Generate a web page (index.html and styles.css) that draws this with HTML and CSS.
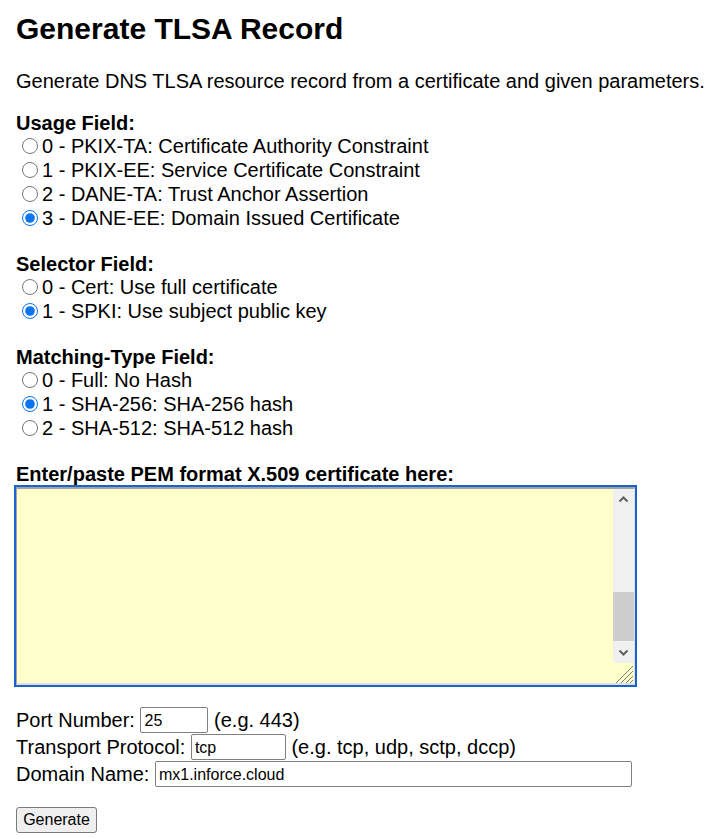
FILE: index.html
```html
<!DOCTYPE html>
<html lang="en">
<head>
<meta charset="utf-8">
<title>Generate TLSA Record</title>
<link rel="stylesheet" href="styles.css">
</head>
<body>
<div class="page">
  <h1 class="title">Generate TLSA Record</h1>
  <p class="intro">Generate DNS TLSA resource record from a certificate and given parameters.</p>

  <div class="group">
    <div class="group-title">Usage Field:</div>
    <label class="opt"><input class="radio" type="radio" name="usage" value="0">0 - PKIX-TA: Certificate Authority Constraint</label>
    <label class="opt"><input class="radio" type="radio" name="usage" value="1">1 - PKIX-EE: Service Certificate Constraint</label>
    <label class="opt"><input class="radio" type="radio" name="usage" value="2">2 - DANE-TA: Trust Anchor Assertion</label>
    <label class="opt"><input class="radio" type="radio" name="usage" value="3" checked>3 - DANE-EE: Domain Issued Certificate</label>
  </div>

  <div class="group">
    <div class="group-title">Selector Field:</div>
    <label class="opt"><input class="radio" type="radio" name="selector" value="0">0 - Cert: Use full certificate</label>
    <label class="opt"><input class="radio" type="radio" name="selector" value="1" checked>1 - SPKI: Use subject public key</label>
  </div>

  <div class="group">
    <div class="group-title">Matching-Type Field:</div>
    <label class="opt"><input class="radio" type="radio" name="mtype" value="0">0 - Full: No Hash</label>
    <label class="opt"><input class="radio" type="radio" name="mtype" value="1" checked>1 - SHA-256: SHA-256 hash</label>
    <label class="opt"><input class="radio" type="radio" name="mtype" value="2">2 - SHA-512: SHA-512 hash</label>
  </div>

  <div class="group">
    <div class="group-title">Enter/paste PEM format X.509 certificate here:</div>
    <div class="pem">
      <textarea class="pem-text" name="cert" spellcheck="false"></textarea>
      <div class="pem-side">
        <div class="sb">
          <div class="sb-btn">
            <svg width="21" height="21" viewBox="0 0 21 21"><polyline points="6.5,12.5 10.5,8.5 14.5,12.5" fill="none" stroke="#5f5f5f" stroke-width="2"/></svg>
          </div>
          <div class="sb-track"><div class="sb-thumb"></div></div>
          <div class="sb-btn">
            <svg width="21" height="21" viewBox="0 0 21 21"><polyline points="6.5,8.5 10.5,12.5 14.5,8.5" fill="none" stroke="#5f5f5f" stroke-width="2"/></svg>
          </div>
        </div>
        <div class="grip">
          <svg width="21" height="20" viewBox="0 0 21 20"><g stroke="#7a7a7a" stroke-width="1"><line x1="20" y1="3" x2="3" y2="20"/><line x1="20" y1="8" x2="8" y2="20"/><line x1="20" y1="13" x2="13" y2="20"/><line x1="20" y1="17" x2="17" y2="20"/></g></svg>
        </div>
      </div>
    </div>
  </div>

  <div class="fields">
    <div class="row">Port Number: <input class="field w-port" type="text" value="25"> (e.g. 443)</div>
    <div class="row">Transport Protocol: <input class="field w-proto" type="text" value="tcp"> (e.g. tcp, udp, sctp, dccp)</div>
    <div class="row">Domain Name: <input class="field w-domain" type="text" value="mx1.inforce.cloud"></div>
  </div>

  <button class="btn" type="button">Generate</button>
</div>
</body>
</html>
```

FILE: styles.css
```css
html, body {
  margin: 0;
  padding: 0;
  background: #ffffff;
}

body {
  font-family: "Liberation Sans", Arial, sans-serif;
  color: #000000;
  font-size: 20px;
}

.page {
  padding: 12px 16px 0 16px;
}

.title {
  margin: 0;
  font-size: 30px;
  line-height: 34px;
  font-weight: bold;
}

.intro {
  margin: 24px 0 0 0;
  line-height: 23px;
}

.group {
  margin-top: 24px;
}

.intro + .group {
  margin-top: 20px;
}

.group-title {
  font-weight: bold;
  line-height: 21px;
}

.opt {
  display: block;
  line-height: 24px;
  height: 24px;
  white-space: nowrap;
}

.radio {
  width: 16px;
  height: 16px;
  margin: 0 4px 0 6px;
  vertical-align: -1px;
  accent-color: #0b74f0;
}

.pem {
  margin-top: 2px;
  width: 619px;
  height: 198px;
  box-sizing: border-box;
  display: flex;
  background: #ffffcc;
  border-top: 2px solid #a2a2a2;
  border-left: 1px solid #a2a2a2;
  border-bottom: 2px solid #dedede;
  border-right: 1px solid #dedede;
  outline: 2px solid #1764cf;
}

.pem-text {
  flex: 1;
  margin: 0;
  border: 0;
  padding: 2px;
  background: transparent;
  resize: none;
  outline: none;
  font-family: "Liberation Mono", monospace;
  font-size: 16px;
}

.pem-side {
  width: 21px;
  display: flex;
  flex-direction: column;
}

.sb {
  background: #f0f0f0;
  display: flex;
  flex-direction: column;
}

.sb-btn {
  height: 21px;
}

.sb-btn svg {
  display: block;
}

.sb-track {
  height: 132px;
}

.sb-thumb {
  margin-top: 82px;
  height: 49px;
  background: #cdcdcd;
}

.grip {
  flex: 1;
  display: flex;
  align-items: flex-end;
}

.grip svg {
  display: block;
}

.fields {
  margin-top: 22px;
}

.row {
  height: 27px;
  line-height: 27px;
  white-space: nowrap;
}

.field {
  vertical-align: top;
  box-sizing: border-box;
  height: 26px;
  margin: 0;
  padding: 2px 3px 0 3px;
  border: 1px solid #808080;
  border-radius: 2px;
  font-family: "Liberation Sans", Arial, sans-serif;
  font-size: 16px;
  color: #000000;
  background: #ffffff;
}

.w-port {
  width: 68px;
}

.w-proto {
  width: 95px;
}

.w-domain {
  width: 477px;
}

.btn {
  display: block;
  margin-top: 19px;
  box-sizing: border-box;
  width: 81px;
  height: 26px;
  padding: 0;
  border: 1px solid #7a7a7a;
  border-radius: 3px;
  background: #efefef;
  font-family: "Liberation Sans", Arial, sans-serif;
  font-size: 16px;
  color: #000000;
}
```
